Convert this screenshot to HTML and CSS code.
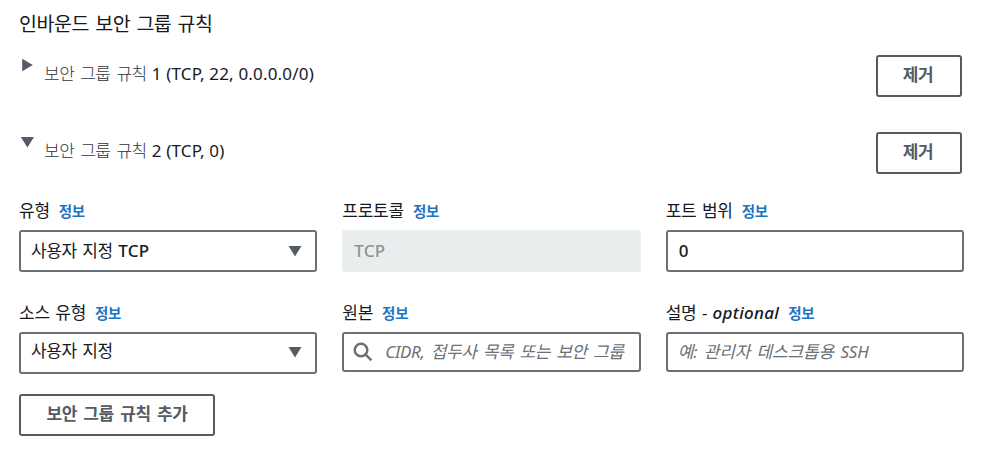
FILE: index.html
```html
<!DOCTYPE html>
<html lang="ko">
<head>
<meta charset="utf-8">
<title>인바운드 보안 그룹 규칙</title>
<link rel="stylesheet" href="styles.css">
</head>
<body>
<main class="panel">
  <h2 class="title">인바운드 보안 그룹 규칙</h2>

  <div class="rule">
    <svg class="toggle" width="14" height="14" viewBox="0 0 14 14"><path d="M2.2 .7 12.8 7 2.2 13.3Z"/></svg>
    <p class="summary"><span class="thin">보안 그룹 규칙</span><span class="latin">1 (TCP, 22, 0.0.0.0/0)</span></p>
    <button class="button remove">제거</button>
  </div>
  <div class="rule">
    <svg class="toggle" width="14" height="14" viewBox="0 0 14 14"><path d="M.8 2H14L7.4 12.4Z"/></svg>
    <p class="summary"><span class="thin">보안 그룹 규칙</span><span class="latin">2 (TCP, 0)</span></p>
    <button class="button remove">제거</button>
  </div>

  <div class="fields">
    <div class="field">
      <div class="label"><span>유형</span><a class="info">정보</a></div>
      <div class="control"><span class="value">사용자 지정 <span class="tcp">TCP</span></span>
        <svg class="caret" width="14" height="14" viewBox="0 0 14 14"><path d="M.5 2H13.5L7 12.4Z"/></svg></div>
    </div>
    <div class="field">
      <div class="label"><span>프로토콜</span><a class="info">정보</a></div>
      <div class="control disabled"><span class="tcp">TCP</span></div>
    </div>
    <div class="field">
      <div class="label"><span>포트 범위</span><a class="info">정보</a></div>
      <div class="control"><span class="port">0</span></div>
    </div>
    <div class="field">
      <div class="label"><span>소스 유형</span><a class="info">정보</a></div>
      <div class="control raised"><span class="value">사용자 지정</span>
        <svg class="caret" width="14" height="14" viewBox="0 0 14 14"><path d="M.5 2H13.5L7 12.4Z"/></svg></div>
    </div>
    <div class="field">
      <div class="label"><span>원본</span><a class="info">정보</a></div>
      <div class="control short search">
        <svg class="lens" width="20" height="20" viewBox="0 0 20 20"><circle cx="8" cy="8" r="6.3"/><path d="M12.6 12.6 18.4 18.4"/></svg>
        <span class="placeholder source">CIDR, 접두사 목록 또는 보안 그룹</span></div>
    </div>
    <div class="field">
      <div class="label"><span>설명 - <em class="optional">optional</em></span><a class="info">정보</a></div>
      <div class="control short"><span class="placeholder example">예: 관리자 데스크톱용 SSH</span></div>
    </div>
  </div>

  <button class="button add">보안 그룹 규칙 추가</button>
</main>
</body>
</html>
```
FILE: styles.css
```css
* { box-sizing: border-box; }

body {
  margin: 0;
  background: #fff;
  color: #16191f;
  font: 17px/24px "Noto Sans", "Noto Sans CJK KR", sans-serif;
}

.panel { padding: 12px 18px 0 19px; }

.title {
  margin: 0 0 19px;
  font-size: 19.5px;
  line-height: 24px;
  font-weight: 400;
  letter-spacing: -0.45px;
  word-spacing: 1.6px;
}

.rule {
  display: flex;
  align-items: flex-start;
  height: 42px;
  margin: 0 2px 35px 0;
}

.toggle { margin: 3px 10px 0 1px; fill: #545b64; }
.caret { fill: #545b64; }

.summary {
  display: flex;
  gap: 5px;
  flex: 1;
  margin: 7px 0 0;
  white-space: nowrap;
}

.thin { color: #30343a; font-weight: 300; letter-spacing: -0.5px; word-spacing: 2px; }
.latin { letter-spacing: 0.18px; }

.button {
  height: 42px;
  padding: 0 0 2px;
  border: 2px solid #545b64;
  border-radius: 3px;
  background: #fff;
  color: #545b64;
  font: bold 17px/24px "Noto Sans", "Noto Sans CJK KR", sans-serif;
  letter-spacing: -0.4px;
  word-spacing: 2.3px;
}

.remove { width: 86px; padding-right: 2px; }
.add { display: block; width: 196px; margin-top: 20px; }

.fields {
  display: grid;
  grid-template-columns: repeat(3, 1fr);
  column-gap: 25px;
  row-gap: 29px;
  margin-top: -10px;
}

.label {
  display: flex;
  align-items: center;
  gap: 9px;
  height: 24px;
  margin-bottom: 7px;
  letter-spacing: -0.25px;
  word-spacing: 1.3px;
  white-space: nowrap;
}

.info { color: #2074c5; font-size: 14.5px; font-weight: 700; }
.optional { font-weight: 500; letter-spacing: 0.3px; }

.control {
  display: flex;
  align-items: center;
  height: 42px;
  padding: 0 13px 0 10px;
  border: 2px solid #687078;
  border-radius: 3px;
  letter-spacing: -0.4px;
  word-spacing: 1.5px;
  white-space: nowrap;
}

.value { flex: 1; padding-bottom: 1px; }
.raised .value { padding-bottom: 4px; }
.raised .caret { margin-bottom: 3px; }
.tcp { font-weight: 500; letter-spacing: 0.2px; }
.port { margin-left: 1px; font-weight: 500; }
.disabled { border-color: #eaeded; background: #eaeded; color: #879596; }
.short { height: 40px; }
.search { padding-left: 9px; }
.lens { margin-right: 12px; fill: none; stroke: #687078; stroke-width: 2.5; }
.placeholder { color: #687078; font-style: italic; }
.source { letter-spacing: -0.35px; word-spacing: 2.1px; }
.example { letter-spacing: -0.15px; word-spacing: 2.1px; }
```
